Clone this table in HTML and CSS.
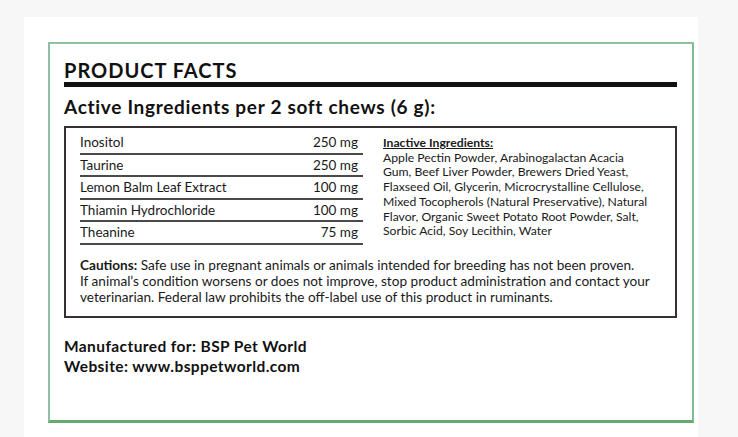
FILE: index.html
```html
<!DOCTYPE html>
<html>
<head>
<meta charset="utf-8">
<link rel="stylesheet" href="styles.css">
</head>
<body>
<div class="sheet">
  <div class="frame">
    <h1 class="title">PRODUCT FACTS</h1>
    <div class="rule"></div>
    <h2 class="subtitle">Active Ingredients per 2 soft chews (6 g):</h2>
    <div class="box">
      <div class="cols">
        <div class="actives">
          <div class="row"><span>Inositol</span><span>250 mg</span></div>
          <div class="row"><span>Taurine</span><span>250 mg</span></div>
          <div class="row"><span>Lemon Balm Leaf Extract</span><span>100 mg</span></div>
          <div class="row"><span>Thiamin Hydrochloride</span><span>100 mg</span></div>
          <div class="row"><span>Theanine</span><span>75 mg</span></div>
        </div>
        <div class="inactive">
          <div class="inactive-head">Inactive Ingredients:</div>
          <div class="inactive-text">Apple Pectin Powder, Arabinogalactan Acacia<br>Gum, Beef Liver Powder, Brewers Dried Yeast,<br>Flaxseed Oil, Glycerin, Microcrystalline Cellulose,<br>Mixed Tocopherols (Natural Preservative), Natural<br>Flavor, Organic Sweet Potato Root Powder, Salt,<br>Sorbic Acid, Soy Lecithin, Water</div>
        </div>
      </div>
      <p class="cautions"><b>Cautions:</b> Safe use in pregnant animals or animals intended for breeding has not been proven.<br>If animal’s condition worsens or does not improve, stop product administration and contact your<br>veterinarian. Federal law prohibits the off-label use of this product in ruminants.</p>
    </div>
    <div class="maker">
      <div>Manufactured for: BSP Pet World</div>
      <div>Website: www.bsppetworld.com</div>
    </div>
  </div>
</div>
</body>
</html>
```

FILE: styles.css
```css
html, body {
  margin: 0;
  padding: 0;
}
body {
  background: #f7f7f7;
  font-family: "Lato", "Open Sans", sans-serif;
  color: #1a1a1a;
  width: 738px;
  height: 437px;
  overflow: hidden;
}
.sheet {
  margin: 17px 0 0 24px;
  width: 674px;
  height: 420px;
  background: #ffffff;
  padding: 25px 0 0 24px;
  box-sizing: border-box;
}
.frame {
  width: 646px;
  height: 381px;
  box-sizing: border-box;
  border: 2px solid #8fc0a0;
  border-bottom: 3px solid #6aa872;
  border-right-color: #7cbd94;
  padding: 0 14px 0 14px;
}
.title {
  margin: 0;
  padding-top: 15px;
  font-size: 20px;
  letter-spacing: 1px;
  font-weight: 700;
  line-height: 22px;
  color: #111;
}
.rule {
  height: 5px;
  background: #111;
  margin-top: 1px;
  margin-right: 1px;
}
.subtitle {
  margin: 9px 0 0 0;
  font-size: 19px;
  letter-spacing: 0.7px;
  font-weight: 700;
  line-height: 22px;
  color: #111;
}
.box {
  margin-top: 8px;
  border: 2px solid #363035;
  height: 192px;
  box-sizing: border-box;
  padding: 4px 14px 0 14px;
  margin-right: 1px;
}
.cols {
  display: flex;
  gap: 20px;
}
.actives {
  width: 283px;
  flex: none;
}
.row {
  display: flex;
  justify-content: space-between;
  font-size: 13.5px;
  line-height: 20px;
  border-bottom: 2px solid #4a4a4a;
  padding: 0 5px 0 0;
  height: 20.5px;
  box-sizing: content-box;
}
.inactive {
  font-size: 12.2px;
  line-height: 14.7px;
  padding-top: 4px;
}
.inactive-head {
  font-weight: 700;
  text-decoration: underline;
}
.cautions {
  margin: 12px 0 0 0;
  font-size: 13.6px;
  line-height: 16px;
}
.cautions b {
  font-weight: 700;
}
.maker {
  margin-top: 18px;
  font-size: 15.5px;
  letter-spacing: 0.4px;
  font-weight: 700;
  line-height: 20px;
  color: #111;
}
```
